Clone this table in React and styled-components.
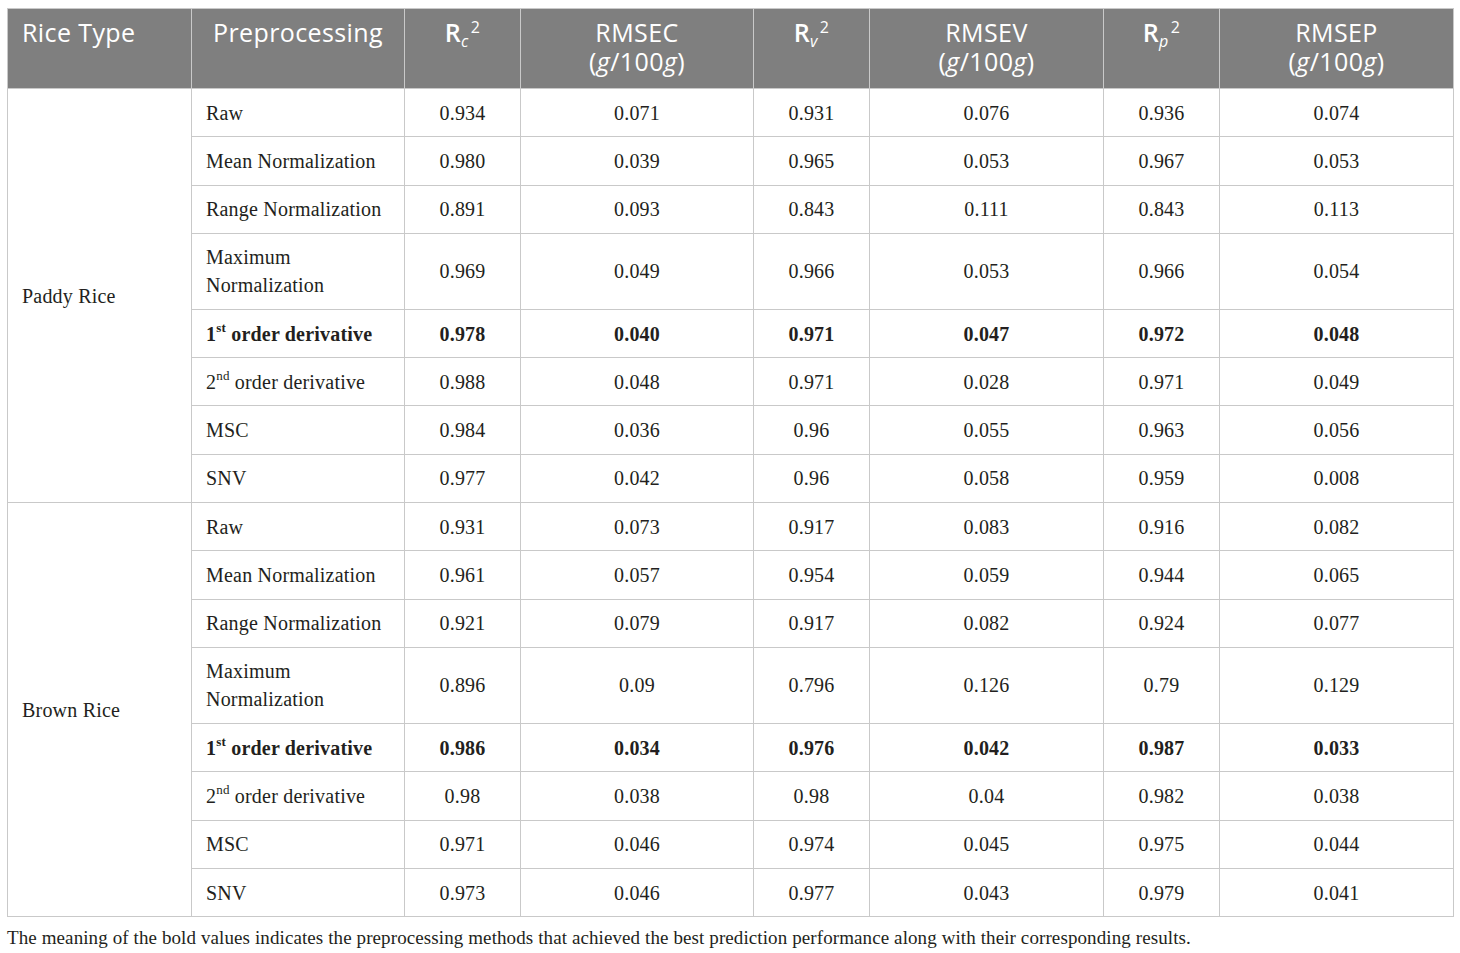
import React from 'react';
import styled, { createGlobalStyle } from 'styled-components';

const GlobalStyle = createGlobalStyle`
    body {
        margin: 0;
        background: #ffffff;
    }
`;

const Page = styled.div`
    padding: 8px 8px 0 7px;
`;

const Table = styled.table`
    border-collapse: collapse;
    table-layout: fixed;
    width: 1446px;
`;

const HeadCell = styled.th`
    background-color: #7f7f7f;
    color: #ffffff;
    font-family: "Open Sans", "Noto Sans", sans-serif;
    font-weight: 400;
    font-size: 25px;
    letter-spacing: 0.4px;
    line-height: 29px;
    height: 80px;
    box-sizing: border-box;
    padding: 9px 14px 0;
    vertical-align: top;
    text-align: ${props => props.left ? 'left' : 'center'};
    border: 1px solid #c9c9c9;
`;

const Cell = styled.td`
    font-family: "Liberation Serif", "Times New Roman", serif;
    font-size: 20px;
    letter-spacing: 0.2px;
    font-weight: ${props => props.bold ? 700 : 400};
    color: #231f20;
    height: ${props => props.tall ? '76px' : '48.3px'};
    box-sizing: border-box;
    padding: 0 14px;
    line-height: 28px;
    vertical-align: middle;
    text-align: ${props => props.left ? 'left' : 'center'};
    border: 1px solid #c9c9c9;
`;

const R = styled.span`
    font-weight: 600;
`;

const Sub = styled.sub`
    font-style: italic;
    font-weight: 400;
    font-size: 16px;
    line-height: 0;
    vertical-align: -5px;
`;

const Sup = styled.sup`
    font-size: 16px;
    line-height: 0;
    vertical-align: 9px;
    margin-left: 2px;
`;

const Ord = styled.sup`
    font-size: 13px;
    line-height: 0;
    vertical-align: 9px;
`;

const Note = styled.p`
    margin: 10px 0 0;
    font-family: "Liberation Serif", "Times New Roman", serif;
    font-size: 19px;
    letter-spacing: 0.1px;
    color: #231f20;
`;

const widths = [184, 213, 116, 233, 116, 234, 116, 234];

const R2 = ({ s }) => (
    <span><R>R</R><Sub>{s}</Sub><Sup>2</Sup></span>
);

const Unit = ({ name }) => (
    <span>{name}<br />(<i>g</i>/100<i>g</i>)</span>
);

const ord = (n, suf) => (
    <span>{n}<Ord>{suf}</Ord> order derivative</span>
);

const methods = [
    'Raw',
    'Mean Normalization',
    'Range Normalization',
    'Maximum Normalization',
    ord(1, 'st'),
    ord(2, 'nd'),
    'MSC',
    'SNV',
];

const groups = [
    {
        name: 'Paddy Rice',
        rows: [
            ['0.934', '0.071', '0.931', '0.076', '0.936', '0.074'],
            ['0.980', '0.039', '0.965', '0.053', '0.967', '0.053'],
            ['0.891', '0.093', '0.843', '0.111', '0.843', '0.113'],
            ['0.969', '0.049', '0.966', '0.053', '0.966', '0.054'],
            ['0.978', '0.040', '0.971', '0.047', '0.972', '0.048'],
            ['0.988', '0.048', '0.971', '0.028', '0.971', '0.049'],
            ['0.984', '0.036', '0.96', '0.055', '0.963', '0.056'],
            ['0.977', '0.042', '0.96', '0.058', '0.959', '0.008'],
        ],
    },
    {
        name: 'Brown Rice',
        rows: [
            ['0.931', '0.073', '0.917', '0.083', '0.916', '0.082'],
            ['0.961', '0.057', '0.954', '0.059', '0.944', '0.065'],
            ['0.921', '0.079', '0.917', '0.082', '0.924', '0.077'],
            ['0.896', '0.09', '0.796', '0.126', '0.79', '0.129'],
            ['0.986', '0.034', '0.976', '0.042', '0.987', '0.033'],
            ['0.98', '0.038', '0.98', '0.04', '0.982', '0.038'],
            ['0.971', '0.046', '0.974', '0.045', '0.975', '0.044'],
            ['0.973', '0.046', '0.977', '0.043', '0.979', '0.041'],
        ],
    },
];

const App = () => (
    <Page>
        <GlobalStyle />
        <Table>
            <colgroup>
                {widths.map((w, i) => <col key={i} style={{ width: w }} />)}
            </colgroup>
            <thead>
                <tr>
                    <HeadCell left>Rice Type</HeadCell>
                    <HeadCell>Preprocessing</HeadCell>
                    <HeadCell><R2 s="c" /></HeadCell>
                    <HeadCell><Unit name="RMSEC" /></HeadCell>
                    <HeadCell><R2 s="v" /></HeadCell>
                    <HeadCell><Unit name="RMSEV" /></HeadCell>
                    <HeadCell><R2 s="p" /></HeadCell>
                    <HeadCell><Unit name="RMSEP" /></HeadCell>
                </tr>
            </thead>
            <tbody>
                {groups.map(g => g.rows.map((vals, i) => (
                    <tr key={g.name + i}>
                        {i === 0 && <Cell left rowSpan={8}>{g.name}</Cell>}
                        <Cell left tall={i === 3} bold={i === 4}>{methods[i]}</Cell>
                        {vals.map((v, j) => (
                            <Cell key={j} tall={i === 3} bold={i === 4}>{v}</Cell>
                        ))}
                    </tr>
                )))}
            </tbody>
        </Table>
        <Note>The meaning of the bold values indicates the preprocessing methods that achieved the best prediction performance along with their corresponding results.</Note>
    </Page>
);

export default App;
